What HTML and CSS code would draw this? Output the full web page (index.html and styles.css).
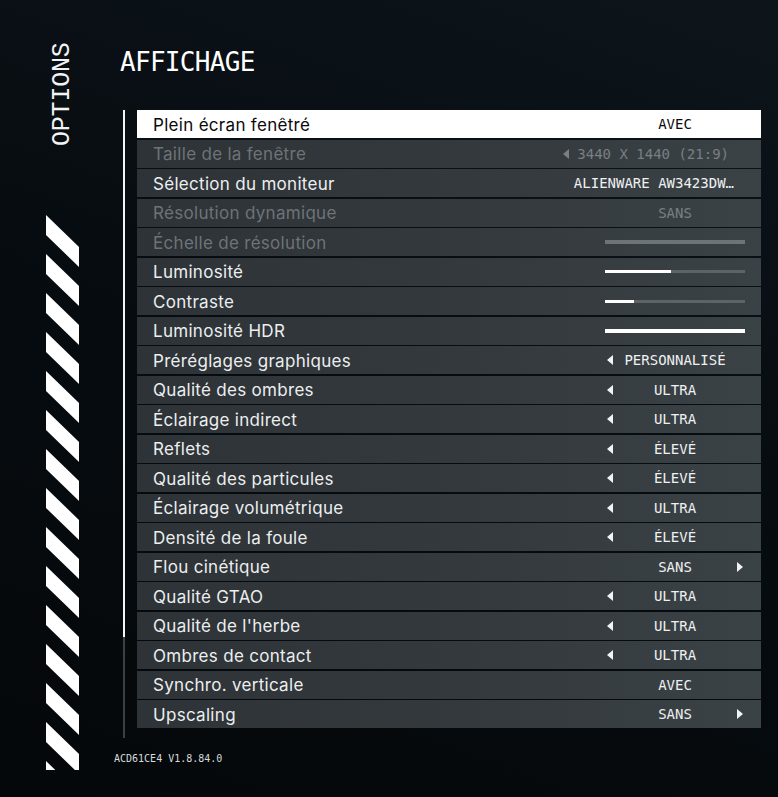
FILE: index.html
```html
<!DOCTYPE html>
<html lang="fr">
<head>
<meta charset="utf-8">
<title>Options - Affichage</title>
<link rel="stylesheet" href="styles.css">
</head>
<body>
<div class="page">
  <aside class="sidebar">
    <div class="options-label">OPTIONS</div>
    <svg class="stripes" width="33" height="555" viewBox="0 0 33 555" aria-hidden="true">
      <defs>
        <clipPath id="clip"><rect x="0" y="0" width="33" height="555"/></clipPath>
      </defs>
      <g clip-path="url(#clip)" fill="#ffffff">
        <polygon points="0,0 33,32 33,52 0,20"/>
        <polygon points="0,39 33,71 33,91 0,59"/>
        <polygon points="0,78 33,110 33,130 0,98"/>
        <polygon points="0,117 33,149 33,169 0,137"/>
        <polygon points="0,156 33,188 33,208 0,176"/>
        <polygon points="0,195 33,227 33,247 0,215"/>
        <polygon points="0,234 33,266 33,286 0,254"/>
        <polygon points="0,273 33,305 33,325 0,293"/>
        <polygon points="0,312 33,344 33,364 0,332"/>
        <polygon points="0,351 33,383 33,403 0,371"/>
        <polygon points="0,390 33,422 33,442 0,410"/>
        <polygon points="0,429 33,461 33,481 0,449"/>
        <polygon points="0,468 33,500 33,520 0,488"/>
        <polygon points="0,507 33,539 33,559 0,527"/>
        <polygon points="0,546 33,578 33,598 0,566"/>
      </g>
    </svg>
  </aside>
  <main class="main">
    <h1 class="title">AFFICHAGE</h1>
    <div class="list-wrap">
      <div class="scrollbar"></div>
      <div class="rows">
        <div class="row selected"><span class="label">Plein écran fenêtré</span><div class="value"><span></span><span class="text">AVEC</span><span></span></div></div>
        <div class="row disabled"><span class="label">Taille de la fenêtre</span><div class="value-wide res"><svg class="arrow" viewBox="0 0 6 10"><polygon points="6,0 6,10 0,5"/></svg><span class="text">3440 X 1440 (21:9)</span></div></div>
        <div class="row"><span class="label">Sélection du moniteur</span><div class="value-wide mon"><span class="text">ALIENWARE AW3423DW…</span></div></div>
        <div class="row disabled"><span class="label">Résolution dynamique</span><div class="value"><span></span><span class="text">SANS</span><span></span></div></div>
        <div class="row disabled"><span class="label">Échelle de résolution</span><div class="slider"><div class="track thick dis"></div></div></div>
        <div class="row"><span class="label">Luminosité</span><div class="slider"><div class="track"><div class="fill" style="width:47%"></div></div></div></div>
        <div class="row"><span class="label">Contraste</span><div class="slider"><div class="track"><div class="fill" style="width:21%"></div></div></div></div>
        <div class="row"><span class="label">Luminosité HDR</span><div class="slider"><div class="track thick"><div class="fill" style="width:100%"></div></div></div></div>
        <div class="row"><span class="label">Préréglages graphiques</span><div class="value"><svg class="arrow" viewBox="0 0 6 10"><polygon points="6,0 6,10 0,5"/></svg><span class="text">PERSONNALISÉ</span><span></span></div></div>
        <div class="row"><span class="label">Qualité des ombres</span><div class="value"><svg class="arrow" viewBox="0 0 6 10"><polygon points="6,0 6,10 0,5"/></svg><span class="text">ULTRA</span><span></span></div></div>
        <div class="row"><span class="label">Éclairage indirect</span><div class="value"><svg class="arrow" viewBox="0 0 6 10"><polygon points="6,0 6,10 0,5"/></svg><span class="text">ULTRA</span><span></span></div></div>
        <div class="row"><span class="label">Reflets</span><div class="value"><svg class="arrow" viewBox="0 0 6 10"><polygon points="6,0 6,10 0,5"/></svg><span class="text">ÉLEVÉ</span><span></span></div></div>
        <div class="row"><span class="label">Qualité des particules</span><div class="value"><svg class="arrow" viewBox="0 0 6 10"><polygon points="6,0 6,10 0,5"/></svg><span class="text">ÉLEVÉ</span><span></span></div></div>
        <div class="row"><span class="label">Éclairage volumétrique</span><div class="value"><svg class="arrow" viewBox="0 0 6 10"><polygon points="6,0 6,10 0,5"/></svg><span class="text">ULTRA</span><span></span></div></div>
        <div class="row"><span class="label">Densité de la foule</span><div class="value"><svg class="arrow" viewBox="0 0 6 10"><polygon points="6,0 6,10 0,5"/></svg><span class="text">ÉLEVÉ</span><span></span></div></div>
        <div class="row"><span class="label">Flou cinétique</span><div class="value"><span></span><span class="text">SANS</span><svg class="arrow right" viewBox="0 0 6 10"><polygon points="0,0 6,5 0,10"/></svg></div></div>
        <div class="row"><span class="label">Qualité GTAO</span><div class="value"><svg class="arrow" viewBox="0 0 6 10"><polygon points="6,0 6,10 0,5"/></svg><span class="text">ULTRA</span><span></span></div></div>
        <div class="row"><span class="label">Qualité de l'herbe</span><div class="value"><svg class="arrow" viewBox="0 0 6 10"><polygon points="6,0 6,10 0,5"/></svg><span class="text">ULTRA</span><span></span></div></div>
        <div class="row"><span class="label">Ombres de contact</span><div class="value"><svg class="arrow" viewBox="0 0 6 10"><polygon points="6,0 6,10 0,5"/></svg><span class="text">ULTRA</span><span></span></div></div>
        <div class="row"><span class="label">Synchro. verticale</span><div class="value"><span></span><span class="text">AVEC</span><span></span></div></div>
        <div class="row"><span class="label">Upscaling</span><div class="value"><span></span><span class="text">SANS</span><svg class="arrow right" viewBox="0 0 6 10"><polygon points="0,0 6,5 0,10"/></svg></div></div>
      </div>
    </div>
    <div class="footer">ACD61CE4 V1.8.84.0</div>
  </main>
</div>
</body>
</html>
```

FILE: styles.css
```css
* { box-sizing: border-box; }
html, body { margin: 0; padding: 0; }
body {
  width: 778px;
  height: 797px;
  overflow: hidden;
  background: linear-gradient(200deg, #0d151b 0%, #070c10 45%, #04080b 100%);
  color: #e9ebec;
  font-family: "Inter", "Open Sans", sans-serif;
}
.page {
  display: flex;
  height: 797px;
}
.sidebar {
  width: 114px;
  flex: none;
  padding-left: 46px;
  display: flex;
  flex-direction: column;
}
.options-label {
  writing-mode: vertical-rl;
  transform: rotate(180deg);
  font-family: "Liberation Mono", monospace;
  font-size: 25px;
  line-height: 20px;
  letter-spacing: -0.2px;
  color: #f2f3f4;
  margin-top: 42px;
  margin-left: 7px;
  width: 20px;
  height: 104px;
  display: flex;
  align-items: center;
  justify-content: center;
}
.stripes {
  display: block;
  margin-top: 69px;
}
.main {
  flex: 1;
  display: flex;
  flex-direction: column;
}
.title {
  margin: 49px 0 0 6px;
  font-family: "DejaVu Sans Mono", monospace;
  font-weight: normal;
  font-size: 26px;
  line-height: 26px;
  letter-spacing: -0.7px;
  color: #ffffff;
}
.list-wrap {
  display: flex;
  margin-top: 35px;
}
.scrollbar {
  width: 2px;
  height: 628px;
  margin-left: 9px;
  background: linear-gradient(#f4f5f6 0, #f4f5f6 527px, #3a4044 527px, #3a4044 100%);
}
.rows {
  width: 624px;
  margin-left: 12px;
  display: flex;
  flex-direction: column;
  gap: 1.5px;
}
.row {
  height: 28px;
  display: flex;
  align-items: center;
  background: linear-gradient(90deg, #2d3337 0%, #343a3e 60%, #3b4246 100%);
  padding-right: 16px;
}
.label {
  flex: 1;
  padding-left: 16px;
  padding-top: 1px;
  font-size: 17px;
  letter-spacing: 0.3px;
  color: #eceeef;
}
.row.selected { background: #ffffff; }
.row.selected .label, .row.selected .value .text { color: #0a0a0a; }
.row.disabled .label { color: #6e7377; }
.row.disabled .text { color: #7a7f83; }
.value {
  width: 140px;
  display: grid;
  grid-template-columns: 10px 1fr 10px;
  align-items: center;
}
.text {
  font-family: "DejaVu Sans Mono", monospace;
  font-size: 14px;
  color: #eef0f1;
  text-align: center;
  white-space: nowrap;
}
.arrow {
  width: 6px;
  height: 10px;
  fill: #f2f3f4;
  display: block;
  margin-left: 2px;
}
.row.disabled .arrow { fill: #7a7f83; }
.value-wide {
  display: flex;
  align-items: center;
}
.value-wide.res { gap: 8px; margin-right: 16px; }
.value-wide.mon { margin-right: 11px; }
.slider {
  width: 140px;
  display: flex;
  align-items: center;
}
.track {
  width: 100%;
  height: 3px;
  background: #5d6468;
}
.track.thick { height: 4px; }
.track.dis { background: #6e7377; }
.fill {
  height: 100%;
  background: #ffffff;
}
.footer {
  margin: 15px 0 0 0;
  font-family: "DejaVu Sans Mono", monospace;
  font-size: 10px;
  line-height: 12px;
  color: #d8dbdd;
}
```
